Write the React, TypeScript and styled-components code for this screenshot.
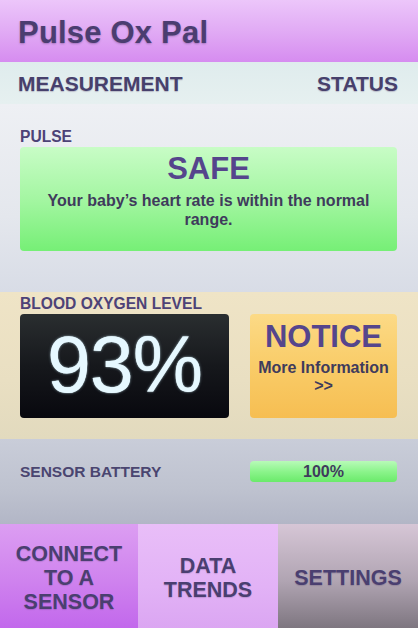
import React from "react";
import styled, { createGlobalStyle } from "styled-components";

const Global = createGlobalStyle`
  html, body { margin: 0; padding: 0; }
  body { font-family: "Liberation Sans", Arial, sans-serif; }
  #root { width: 418px; height: 628px; }
`;

const Screen = styled.div`
  width: 418px;
  height: 628px;
  display: flex;
  flex-direction: column;
  overflow: hidden;
  color: #4a3f6e;
  font-weight: 700;
`;

const Header = styled.header`
  height: 62px;
  flex: none;
  box-sizing: border-box;
  display: flex;
  align-items: center;
  padding: 3px 0 0 18px;
  background: linear-gradient(180deg, #ecc6fa 0%, #e0a8f4 55%, #d68cf0 100%);
`;

const Title = styled.h1`
  margin: 0;
  font-size: 31px;
  font-weight: 700;
  color: #4b3d70;
  text-shadow: 0 1px 2px rgba(60, 40, 90, 0.35);
  letter-spacing: 0.2px;
`;

const SubHeader = styled.div`
  height: 42px;
  flex: none;
  box-sizing: border-box;
  display: flex;
  align-items: center;
  justify-content: space-between;
  padding: 2px 20px 0 18px;
  background: linear-gradient(180deg, #dfeced 0%, #e6f0f0 100%);
  font-size: 21px;
  color: #47406c;
  text-shadow: 0 1px 1px rgba(60, 40, 90, 0.25);
`;

const Section = styled.section<{ $h: number; $top: number; $bg: string }>`
  height: ${(p) => p.$h}px;
  flex: none;
  box-sizing: border-box;
  padding: ${(p) => p.$top}px 21px 0 20px;
  background: ${(p) => p.$bg};
  display: flex;
  flex-direction: column;
`;

const Label = styled.div`
  font-size: 15.6px;
  line-height: 18px;
  color: #4d4277;
  margin-bottom: 1px;
`;

const StatusBox = styled.div`
  height: 104px;
  box-sizing: border-box;
  border-radius: 4px;
  background: linear-gradient(180deg, #c8fcc6 0%, #a4f6a2 50%, #76ef76 100%);
  display: flex;
  flex-direction: column;
  align-items: center;
  padding: 5px 16px 0;
  text-align: center;
`;

const BigWord = styled.div`
  font-size: 31px;
  line-height: 34px;
  color: #55458c;
`;

const Message = styled.div`
  font-size: 16px;
  line-height: 19px;
  color: #3f3b5c;
  margin-top: 5px;
`;

const Row = styled.div`
  display: flex;
  gap: 21px;
`;

const Reading = styled.div`
  width: 209px;
  height: 104px;
  flex: none;
  border-radius: 4px;
  background: linear-gradient(180deg, #2a2e30 0%, #16181c 50%, #08080e 100%);
  display: flex;
  align-items: center;
  justify-content: center;
  font-size: 79px;
  font-weight: 400;
  letter-spacing: -1px;
  color: #e6f8ff;
  text-shadow: 0 0 1px #e6f8ff, 0 0 3px rgba(200, 240, 255, 0.5);
  padding-bottom: 2px;
  box-sizing: border-box;
`;

const Notice = styled.div`
  flex: 1;
  height: 104px;
  border-radius: 4px;
  background: linear-gradient(180deg, #fcda86 0%, #f9cc68 50%, #f6be52 100%);
  display: flex;
  flex-direction: column;
  align-items: center;
  padding-top: 6px;
  box-sizing: border-box;
  text-align: center;
`;

const NoticeText = styled.div<{ $gap: number }>`
  font-size: 16px;
  line-height: 18px;
  color: #3f3b5c;
  margin-top: ${(p) => p.$gap}px;
`;

const BatteryRow = styled.div`
  display: flex;
  align-items: center;
  justify-content: space-between;
  height: 21px;
`;

const BatteryLabel = styled.div`
  font-size: 15.5px;
  color: #4a4570;
`;

const BatteryBar = styled.div`
  width: 147px;
  height: 21px;
  border-radius: 4px;
  background: linear-gradient(180deg, #b8fab8 0%, #8cf48c 50%, #6aea6a 100%);
  display: flex;
  align-items: center;
  justify-content: center;
  font-size: 16px;
  color: #3f3b5c;
`;

const Footer = styled.nav`
  flex: 1;
  display: flex;
`;

const Tab = styled.div<{ $w: number; $bg: string }>`
  width: ${(p) => p.$w}px;
  flex: none;
  box-sizing: border-box;
  padding-top: 4px;
  background: ${(p) => p.$bg};
  display: flex;
  align-items: center;
  justify-content: center;
  text-align: center;
  font-size: 21.5px;
  line-height: 24px;
  color: #4a3f70;
  text-shadow: 0 1px 1px rgba(60, 40, 90, 0.2);
`;

export default function App() {
  return (
    <>
      <Global />
      <Screen>
        <Header>
          <Title>Pulse Ox Pal</Title>
        </Header>
        <SubHeader>
          <span>MEASUREMENT</span>
          <span>STATUS</span>
        </SubHeader>
        <Section $h={188} $top={24} $bg="linear-gradient(180deg, #eef0f4 0%, #e4e7ed 60%, #d8dce6 100%)">
          <Label>PULSE</Label>
          <StatusBox>
            <BigWord>SAFE</BigWord>
            <Message>Your baby’s heart rate is within the normal range.</Message>
          </StatusBox>
        </Section>
        <Section $h={147} $top={3} $bg="linear-gradient(180deg, #efe4c6 0%, #e9dfc2 60%, #e2dabe 100%)">
          <Label>BLOOD OXYGEN LEVEL</Label>
          <Row>
            <Reading>93%</Reading>
            <Notice>
              <BigWord>NOTICE</BigWord>
              <NoticeText $gap={5}>More Information</NoticeText>
              <NoticeText $gap={0}>&gt;&gt;</NoticeText>
            </Notice>
          </Row>
        </Section>
        <Section $h={85} $top={22} $bg="linear-gradient(180deg, #c9cdd9 0%, #bec2cf 60%, #b2b6c6 100%)">
          <BatteryRow>
            <BatteryLabel>SENSOR BATTERY</BatteryLabel>
            <BatteryBar>100%</BatteryBar>
          </BatteryRow>
        </Section>
        <Footer>
          <Tab $w={138} $bg="linear-gradient(180deg, #dc9ef2 0%, #cf82ee 55%, #c268ec 100%)">
            CONNECT
            <br />
            TO A
            <br />
            SENSOR
          </Tab>
          <Tab $w={140} $bg="linear-gradient(180deg, #e9bef8 0%, #e2b2f6 60%, #dba6f2 100%)">
            DATA
            <br />
            TRENDS
          </Tab>
          <Tab $w={140} $bg="linear-gradient(180deg, #d6c6d6 0%, #b0a4b2 55%, #7e7680 100%)">
            SETTINGS
          </Tab>
        </Footer>
      </Screen>
    </>
  );
}
